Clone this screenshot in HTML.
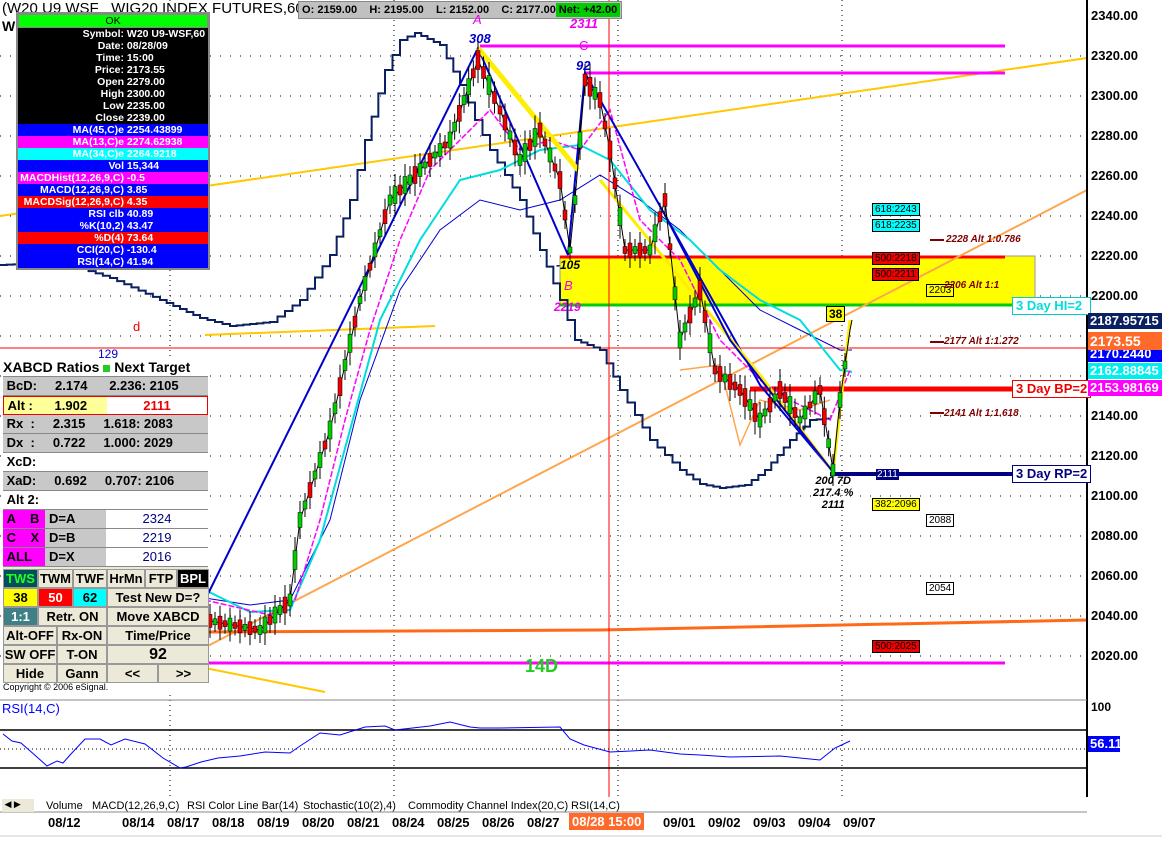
<!DOCTYPE html>
<html><head><meta charset="utf-8"><style>
body{margin:0;width:1162px;height:848px;overflow:hidden;background:#fff;font-family:"Liberation Sans",Arial,sans-serif;position:relative}
.abs{position:absolute}
.dbox{position:absolute;left:16px;top:12px;width:190px;border:2px solid #888;background:#000;font-size:10.5px;font-weight:bold;color:#fff}
.dbox div{height:12px;line-height:12px;white-space:nowrap}
.dbox .l{display:inline-block;width:106px;text-align:right}
.pan{position:absolute;left:3px;top:358px;width:205px;font-size:13px;font-weight:bold}
.r{height:18px;line-height:18px;border-bottom:1px solid #888;position:relative}
.btn{position:absolute;background:#ece9d8;border:1px solid #999;text-align:center;font-size:13px;font-weight:bold;line-height:17px;height:17px}
.ax{position:absolute;left:1091px;font-size:13px;font-weight:bold}
.tag{position:absolute;left:1088px;font-size:13px;font-weight:bold;color:#fff;height:16px;line-height:16px;padding-left:2px;width:72px}
.dt{position:absolute;top:815px;font-size:13px;font-weight:bold}
.tab{position:absolute;top:799px;font-size:11px;height:14px;line-height:14px}
</style></head><body>
<svg class="abs" style="left:0;top:0" width="1162" height="848">
<g stroke="#000" stroke-width="1" stroke-dasharray="1,9">
<line x1="0" y1="56" x2="1087" y2="56"/><line x1="0" y1="96" x2="1087" y2="96"/><line x1="0" y1="136" x2="1087" y2="136"/><line x1="0" y1="176" x2="1087" y2="176"/><line x1="0" y1="216" x2="1087" y2="216"/><line x1="0" y1="256" x2="1087" y2="256"/><line x1="0" y1="296" x2="1087" y2="296"/><line x1="0" y1="336" x2="1087" y2="336"/><line x1="0" y1="376" x2="1087" y2="376"/><line x1="0" y1="416" x2="1087" y2="416"/><line x1="0" y1="456" x2="1087" y2="456"/><line x1="0" y1="496" x2="1087" y2="496"/><line x1="0" y1="536" x2="1087" y2="536"/><line x1="0" y1="576" x2="1087" y2="576"/><line x1="0" y1="616" x2="1087" y2="616"/><line x1="0" y1="656" x2="1087" y2="656"/>
</g>
<g stroke="#000" stroke-dasharray="1,4"><line x1="170" y1="0" x2="170" y2="797"/><line x1="394" y1="0" x2="394" y2="797"/><line x1="618" y1="0" x2="618" y2="797"/><line x1="842" y1="0" x2="842" y2="797"/></g>
<rect x="560" y="256" width="475" height="50" fill="#ffff00" stroke="#999"/>
<line x1="560" y1="257" x2="1005" y2="257" stroke="#f00" stroke-width="3"/>
<line x1="560" y1="305" x2="1012" y2="305" stroke="#0c0" stroke-width="3"/>
<line x1="0" y1="216" x2="1087" y2="58" stroke="#ffc800" stroke-width="2"/>
<line x1="200" y1="650" x2="1087" y2="190" stroke="#ffa64d" stroke-width="2"/>
<line x1="205" y1="335" x2="435" y2="326" stroke="#ffc800" stroke-width="2"/>
<line x1="205" y1="668" x2="325" y2="692" stroke="#ffc800" stroke-width="2"/>
<line x1="480" y1="46" x2="1005" y2="46" stroke="#f0f" stroke-width="3"/>
<line x1="585" y1="73" x2="1005" y2="73" stroke="#f0f" stroke-width="3"/>
<line x1="205" y1="663" x2="1005" y2="663" stroke="#f0f" stroke-width="3"/>
<polyline points="205,632 600,630 1087,620" fill="none" stroke="#ff6a1a" stroke-width="3"/>
<line x1="0" y1="348" x2="1087" y2="348" stroke="#f00" stroke-width="1"/>
<line x1="750" y1="389" x2="1012" y2="389" stroke="#f00" stroke-width="5"/>
<line x1="830" y1="474" x2="1012" y2="474" stroke="#000080" stroke-width="4"/>
<line x1="930" y1="240" x2="944" y2="240" stroke="#800000" stroke-width="2"/><line x1="930" y1="342" x2="944" y2="342" stroke="#800000" stroke-width="2"/><line x1="930" y1="413" x2="944" y2="413" stroke="#800000" stroke-width="2"/>
<polyline id="cyc" points="0,265 60,262 110,278 160,300 200,318 230,326 270,322 300,300 330,255 350,200 365,140 385,70 400,40 415,33 440,45 460,85 475,120 490,150 505,175 520,200 540,250 560,300 575,340 600,350 620,390 650,440 680,470 700,484 720,488 745,485 765,470 790,440 810,420 830,418"
 fill="none" stroke="#0a2060" stroke-width="2"/>
<polyline points="205,598 250,605 290,600 330,520 360,400 400,290 440,230 480,200 520,210 560,200 600,175 640,200 680,230 720,270 760,310 800,330 840,350 852,350" fill="none" stroke="#0000cc" stroke-width="1"/>
<polyline points="205,590 250,612 290,610 320,540 350,430 380,320 420,240 460,180 500,170 540,150 580,145 610,160 650,210 690,240 720,270 760,300 800,320 840,370 852,372" fill="none" stroke="#00dddd" stroke-width="2"/>
<polyline points="205,600 270,615 295,600 320,520 345,420 370,330 400,240 430,170 460,140 490,110 520,150 550,140 580,150 610,110 640,220 680,260 700,300 720,340 760,380 790,400 830,420 850,370" fill="none" stroke="#f0f" stroke-width="1.5" stroke-dasharray="6,2"/>
<polyline points="680,370 720,365 740,445 760,400 800,410 830,400" fill="none" stroke="#ffa64d" stroke-width="1.5"/>
<polyline points="205,600 478,48 568,255 585,73 665,215 760,385 833,472" fill="none" stroke="#0000cc" stroke-width="2"/>
<polyline points="478,48 578,170" stroke="#ffee00" stroke-width="5" fill="none"/>
<polyline points="600,180 760,375 833,472 850,320" stroke="#ffee00" stroke-width="3" fill="none"/>
<polyline points="665,215 730,340 833,472" stroke="#0000cc" stroke-width="2" fill="none"/>
<polyline points="205,620 260,630 290,600 300,520 330,430 360,300 390,200 420,170 450,140 478,60 500,110 520,160 540,130 560,180 570,250 575,200 585,80 600,100 610,150 625,250 650,250 665,200 680,340 700,290 715,370 740,390 760,420 780,390 800,420 820,390 833,470 840,400 850,330 852,320" fill="none" stroke="#000" stroke-width="1"/>
<g id="cdl"></g>
<line x1="609" y1="0" x2="609" y2="812" stroke="#f00" stroke-width="1"/>
<line x1="1087" y1="0" x2="1087" y2="797" stroke="#000" stroke-width="2"/>
<line x1="0" y1="700" x2="1087" y2="700" stroke="#888"/>
<line x1="0" y1="730" x2="1087" y2="730" stroke="#000" stroke-width="1.5"/>
<line x1="0" y1="768" x2="1087" y2="768" stroke="#000" stroke-width="1.5"/>
<line x1="0" y1="749" x2="1087" y2="749" stroke="#000" stroke-dasharray="1,3"/>
<polyline points="3,734 12,741 21,743 37,757 47,766 57,761 63,763 70,755 85,739 100,739 111,745 125,739 145,744 163,758 180,768 186,767 201,762 218,758 240,756 265,752 290,753 300,746 320,733 340,735 365,727 385,726 395,730 430,726 450,722 470,727 480,728 500,728 560,727 570,739 584,745 610,752 650,750 680,754 700,755 730,757 780,756 820,760 835,748 850,741" fill="none" stroke="#0000ff" stroke-width="1"/>
<rect x="0" y="797" width="1162" height="51" fill="#fff"/>
<line x1="0" y1="812" x2="1087" y2="812" stroke="#888"/>
<line x1="0" y1="836" x2="1162" y2="836" stroke="#ccc"/>
</svg>
<script>
(function(){var p=[[205,620],[260,630],[290,600],[300,520],[330,430],[360,300],[390,200],[420,170],[450,140],[478,60],[500,110],[520,160],[540,130],[560,180],[570,250],[575,200],[585,80],[600,100],[610,150],[625,250],[650,250],[665,200],[680,340],[700,290],[715,370],[740,390],[760,420],[780,390],[800,420],[820,390],[833,470],[840,400],[850,330]];
var g=document.getElementById('cdl'),s='';for(var i=0;i<p.length-1;i++){var a=p[i],b=p[i+1],n=Math.max(1,Math.round((b[0]-a[0])/5));for(var k=0;k<n;k++){var x=a[0]+(b[0]-a[0])*k/n,y=a[1]+(b[1]-a[1])*k/n,h=6+((k*7+i*3)%14),up=(b[1]<a[1])^(k%3==2);s+='<line x1="'+x+'" y1="'+(y-h-4)+'" x2="'+x+'" y2="'+(y+h+4)+'" stroke="#000"/><rect x="'+(x-2)+'" y="'+(y-h/2)+'" width="4" height="'+h+'" fill="'+(up?'#0c0':'#e00')+'" stroke="#000" stroke-width="0.5"/>';}}g.innerHTML=s;
var c=document.getElementById('cyc'),pts=c.getAttribute('points').trim().split(/\s+/).map(function(q){return q.split(',').map(Number)}),o=[];
for(var j=0;j<pts.length-1;j++){var A=pts[j],B=pts[j+1],m=Math.max(1,Math.round((B[0]-A[0])/7));for(var t=0;t<m;t++){var x0=A[0]+(B[0]-A[0])*t/m,x1=A[0]+(B[0]-A[0])*(t+1)/m,y0=A[1]+(B[1]-A[1])*t/m,y1=A[1]+(B[1]-A[1])*(t+1)/m;o.push(x0+','+y0,x1+','+y0,x1+','+y1);}}c.setAttribute('points',o.join(' '));})();
</script>
<div class="abs" style="left:2px;top:0;font-size:15px">(W20 U9 WSF &nbsp; WIG20 INDEX FUTURES,60) 500</div>
<div class="abs" style="left:2px;top:18px;font-size:14px;font-weight:bold">W</div>
<div class="abs" style="left:298px;top:1px;width:322px;height:16px;background:#c0c0c0;border:1px solid #888;font-size:11px;font-weight:bold;line-height:16px">&nbsp;O: 2159.00 &nbsp;&nbsp; H: 2195.00 &nbsp;&nbsp; L: 2152.00 &nbsp;&nbsp; C: 2177.00 <span style="position:absolute;right:1px;top:1px;width:64px;height:14px;line-height:14px;background:#0c0;text-align:center">Net: +42.00</span></div>
<div class="dbox">
<div style="background:#0f0;color:#000;text-align:center;font-weight:normal;border:1px solid #888">OK</div>
<div><span class="l">Symbol:</span> W20 U9-WSF,60</div><div><span class="l">Date:</span> 08/28/09</div><div><span class="l">Time:</span> 15:00</div><div><span class="l">Price:</span> 2173.55</div><div><span class="l">Open</span> 2279.00</div><div><span class="l">High</span> 2300.00</div><div><span class="l">Low</span> 2235.00</div><div><span class="l">Close</span> 2239.00</div>
<div style="background:#00f"><span class="l">MA(45,C)e</span> 2254.43899</div><div style="background:#f0f"><span class="l">MA(13,C)e</span> 2274.62938</div><div style="background:#0ff"><span class="l">MA(34,C)e</span> 2264.9218</div><div style="background:#00f"><span class="l">Vol</span> 15,344</div><div style="background:#f0f"><span class="l">MACDHist(12,26,9,C)</span> -0.5</div><div style="background:#00f"><span class="l">MACD(12,26,9,C)</span> 3.85</div><div style="background:#f00"><span class="l">MACDSig(12,26,9,C)</span> 4.35</div><div style="background:#00f"><span class="l">RSI clb</span> 40.89</div><div style="background:#00f"><span class="l">%K(10,2)</span> 43.47</div><div style="background:#f00"><span class="l">%D(4)</span> 73.64</div><div style="background:#00f"><span class="l">CCI(20,C)</span> -130.4</div><div style="background:#00f"><span class="l">RSI(14,C)</span> 41.94</div>
</div>
<div class="abs" style="left:473px;top:12px;color:#e0e;font-style:italic;font-size:13px">A</div>
<div class="abs" style="left:469px;top:31px;color:#00c;font-style:italic;font-weight:bold;font-size:13px">308</div>
<div class="abs" style="left:570px;top:16px;color:#e0e;font-style:italic;font-weight:bold;font-size:13px">2311</div>
<div class="abs" style="left:579px;top:38px;color:#e0e;font-size:13px">C</div>
<div class="abs" style="left:576px;top:58px;color:#00c;font-style:italic;font-weight:bold;font-size:13px">92</div>
<div class="abs" style="left:556px;top:258px;color:#000;font-style:italic;font-weight:bold;font-size:12px">-105</div>
<div class="abs" style="left:564px;top:278px;color:#e0e;font-style:italic;font-size:13px">B</div>
<div class="abs" style="left:554px;top:300px;color:#e0e;font-style:italic;font-weight:bold;font-size:12px">2219</div>
<div class="abs" style="left:133px;top:319px;color:#e00;font-size:13px">d</div>
<div class="abs" style="left:98px;top:347px;color:#00c;font-size:12px">129</div>
<div class="abs" style="left:525px;top:656px;color:#2c2;font-size:18px;font-weight:bold">14D</div>
<div class="abs" style="left:813px;top:475px;font-style:italic;font-weight:bold;font-size:11px;text-align:center;line-height:12px">200 7D<br>217.4 %<br>2111</div>
<div class="abs" style="left:826px;top:306px;background:#ff0;border:1px solid #000;font-size:12px;font-weight:bold;padding:0 2px">38</div>
<div class="abs" style="left:872px;top:203px;background:#0ff;border:1px solid #000;font-size:10px;padding:0 2px">618:2243</div>
<div class="abs" style="left:872px;top:219px;background:#0ff;border:1px solid #000;font-size:10px;padding:0 2px">618:2235</div>
<div class="abs" style="left:872px;top:252px;background:#e00;border:1px solid #000;font-size:10px;padding:0 2px">500:2218</div>
<div class="abs" style="left:872px;top:268px;background:#e00;border:1px solid #000;font-size:10px;padding:0 2px">500:2211</div>
<div class="abs" style="left:926px;top:284px;border:1px solid #000;font-size:10px;padding:0 2px">2203</div>
<div class="abs" style="left:872px;top:498px;background:#ff0;border:1px solid #000;font-size:10px;padding:0 2px">382:2096</div>
<div class="abs" style="left:926px;top:514px;border:1px solid #000;font-size:10px;padding:0 2px;background:#fff">2088</div>
<div class="abs" style="left:926px;top:582px;border:1px solid #000;font-size:10px;padding:0 2px;background:#fff">2054</div>
<div class="abs" style="left:872px;top:640px;background:#e00;border:1px solid #000;font-size:10px;padding:0 2px">500:2025</div>
<div class="abs" style="left:876px;top:469px;background:#000080;color:#fff;font-size:10px;padding:0 1px">2111</div>
<div class="abs" style="left:946px;top:234px;color:#800000;font-style:italic;font-weight:bold;font-size:10px">2228 Alt 1:0.786</div>
<div class="abs" style="left:944px;top:280px;color:#800000;font-style:italic;font-weight:bold;font-size:10px">2206 Alt 1:1</div>
<div class="abs" style="left:944px;top:336px;color:#800000;font-style:italic;font-weight:bold;font-size:10px">2177 Alt 1:1.272</div>
<div class="abs" style="left:944px;top:408px;color:#800000;font-style:italic;font-weight:bold;font-size:10px">2141 Alt 1:1.618</div>
<div class="abs" style="left:1012px;top:297px;width:74px;height:16px;border:1px solid #0cc;background:#fff;color:#0dd;font-weight:bold;font-size:13px;overflow:hidden;white-space:nowrap;padding-left:3px">3 Day HI=2</div>
<div class="abs" style="left:1012px;top:380px;width:74px;height:16px;border:1px solid #e00;background:#fff;color:#e00;font-weight:bold;font-size:13px;overflow:hidden;white-space:nowrap;padding-left:3px">3 Day BP=2</div>
<div class="abs" style="left:1012px;top:465px;width:74px;height:16px;border:1px solid #000080;background:#fff;color:#000080;font-weight:bold;font-size:13px;overflow:hidden;white-space:nowrap;padding-left:3px">3 Day RP=2</div>
<div class="ax" style="top:8px">2340.00</div><div class="ax" style="top:48px">2320.00</div><div class="ax" style="top:88px">2300.00</div><div class="ax" style="top:128px">2280.00</div><div class="ax" style="top:168px">2260.00</div><div class="ax" style="top:208px">2240.00</div><div class="ax" style="top:248px">2220.00</div><div class="ax" style="top:288px">2200.00</div><div class="ax" style="top:408px">2140.00</div><div class="ax" style="top:448px">2120.00</div><div class="ax" style="top:488px">2100.00</div><div class="ax" style="top:528px">2080.00</div><div class="ax" style="top:568px">2060.00</div><div class="ax" style="top:608px">2040.00</div><div class="ax" style="top:648px">2020.00</div>
<div class="tag" style="top:336px;background:#0f0;width:44px">2177</div>
<div class="tag" style="top:346px;background:#00f">2170.2440</div>
<div class="tag" style="top:313px;background:#0a2060">2187.95715</div>
<div class="tag" style="top:332px;background:#ff6a2a;height:18px;line-height:18px;font-size:14px">2173.55</div>
<div class="tag" style="top:363px;background:#0ee">2162.88845</div>
<div class="tag" style="top:380px;background:#f0f">2153.98169</div>
<div class="ax" style="top:700px;font-size:12px">100</div>
<div class="tag" style="top:736px;background:#00f;width:30px">56.11</div>
<div class="abs" style="left:2px;top:701px;color:#00f;font-size:13px">RSI(14,C)</div>
<div class="pan">
<div class="r" style="background:#fff;font-size:14px">XABCD Ratios <span style="display:inline-block;width:7px;height:7px;background:#2c2"></span> Next Target</div>
<div class="r" style="background:#c8c8c8">&nbsp;BcD: &nbsp;&nbsp;&nbsp; 2.174 &nbsp;&nbsp;&nbsp;&nbsp; 2.236: 2105</div>
<div class="r" style="background:#ffff99;border:1px solid #e00;height:17px;line-height:17px">&nbsp;Alt : &nbsp;&nbsp;&nbsp;&nbsp; 1.902<span style="position:absolute;left:103px;top:0;width:100px;background:#fff;height:17px;text-align:center;color:#e00">2111</span></div>
<div class="r" style="background:#c8c8c8">&nbsp;Rx &nbsp;: &nbsp;&nbsp;&nbsp; 2.315 &nbsp;&nbsp;&nbsp; 1.618: 2083</div>
<div class="r" style="background:#c8c8c8">&nbsp;Dx &nbsp;: &nbsp;&nbsp;&nbsp; 0.722 &nbsp;&nbsp;&nbsp; 1.000: 2029</div>
<div class="r" style="background:#fff">&nbsp;XcD:</div>
<div class="r" style="background:#c8c8c8">&nbsp;XaD: &nbsp;&nbsp;&nbsp; 0.692 &nbsp;&nbsp;&nbsp; 0.707: 2106</div>
<div class="r" style="background:#fff">&nbsp;Alt 2:</div>
<div class="r" style="background:#c8c8c8"><span style="position:absolute;left:0;width:42px;background:#f0f;height:18px">&nbsp;A &nbsp;&nbsp; B</span><span style="position:absolute;left:46px">D=A</span><span style="position:absolute;left:103px;width:102px;background:#fff;text-align:center;color:#000080;font-weight:normal">2324</span></div>
<div class="r" style="background:#c8c8c8"><span style="position:absolute;left:0;width:42px;background:#f0f;height:18px">&nbsp;C &nbsp;&nbsp; X</span><span style="position:absolute;left:46px">D=B</span><span style="position:absolute;left:103px;width:102px;background:#fff;text-align:center;color:#000080;font-weight:normal">2219</span></div>
<div class="r" style="background:#c8c8c8"><span style="position:absolute;left:0;width:42px;background:#f0f;height:18px">&nbsp;ALL</span><span style="position:absolute;left:46px">D=X</span><span style="position:absolute;left:103px;width:102px;background:#fff;text-align:center;color:#000080;font-weight:normal">2016</span></div>
<div style="position:relative;height:115px;background:#ece9d8">
<div class="btn" style="left:0;top:2px;width:33px;background:#00505a;color:#2f2">TWS</div>
<div class="btn" style="left:35px;top:2px;width:33px">TWM</div>
<div class="btn" style="left:70px;top:2px;width:32px">TWF</div>
<div class="btn" style="left:104px;top:2px;width:36px">HrMn</div>
<div class="btn" style="left:142px;top:2px;width:30px">FTP</div>
<div class="btn" style="left:174px;top:2px;width:30px;background:#000;color:#fff">BPL</div>
<div class="btn" style="left:0;top:21px;width:33px;background:#ff0">38</div>
<div class="btn" style="left:35px;top:21px;width:33px;background:#f00;color:#fff">50</div>
<div class="btn" style="left:70px;top:21px;width:32px;background:#0ff">62</div>
<div class="btn" style="left:104px;top:21px;width:100px">Test New D=?</div>
<div class="btn" style="left:0;top:40px;width:33px;background:#3f7f86;color:#fff">1:1</div>
<div class="btn" style="left:35px;top:40px;width:67px">Retr. ON</div>
<div class="btn" style="left:104px;top:40px;width:100px">Move XABCD</div>
<div class="btn" style="left:0;top:59px;width:52px">Alt-OFF</div>
<div class="btn" style="left:54px;top:59px;width:48px">Rx-ON</div>
<div class="btn" style="left:104px;top:59px;width:100px">Time/Price</div>
<div class="btn" style="left:0;top:78px;width:52px">SW OFF</div>
<div class="btn" style="left:54px;top:78px;width:48px">T-ON</div>
<div class="btn" style="left:104px;top:78px;width:100px;font-size:16px">92</div>
<div class="btn" style="left:0;top:97px;width:52px">Hide</div>
<div class="btn" style="left:54px;top:97px;width:48px">Gann</div>
<div class="btn" style="left:104px;top:97px;width:49px">&lt;&lt;</div>
<div class="btn" style="left:155px;top:97px;width:49px">&gt;&gt;</div>
</div>
<div style="background:#fff;font-size:9px;font-weight:normal;height:12px">Copyright © 2006 eSignal.</div>
</div>
<div class="abs" style="left:2px;top:799px;width:32px;height:13px;background:#ece9d8;font-size:9px">&nbsp;◀ ▶</div>
<div class="tab" style="left:46px">Volume</div><div class="tab" style="left:92px">MACD(12,26,9,C)</div><div class="tab" style="left:187px">RSI Color Line Bar(14)</div><div class="tab" style="left:303px">Stochastic(10(2),4)</div><div class="tab" style="left:408px">Commodity Channel Index(20,C)</div><div class="tab" style="left:571px">RSI(14,C)</div>
<div class="dt" style="left:48px">08/12</div><div class="dt" style="left:122px">08/14</div><div class="dt" style="left:167px">08/17</div><div class="dt" style="left:212px">08/18</div><div class="dt" style="left:257px">08/19</div><div class="dt" style="left:302px">08/20</div><div class="dt" style="left:347px">08/21</div><div class="dt" style="left:392px">08/24</div><div class="dt" style="left:437px">08/25</div><div class="dt" style="left:482px">08/26</div><div class="dt" style="left:527px">08/27</div>
<div class="dt" style="left:569px;top:813px;background:#ff6a2a;color:#fff;padding:1px 3px">08/28 15:00</div>
<div class="dt" style="left:663px">09/01</div><div class="dt" style="left:708px">09/02</div><div class="dt" style="left:753px">09/03</div><div class="dt" style="left:798px">09/04</div><div class="dt" style="left:843px">09/07</div>
</body></html>
